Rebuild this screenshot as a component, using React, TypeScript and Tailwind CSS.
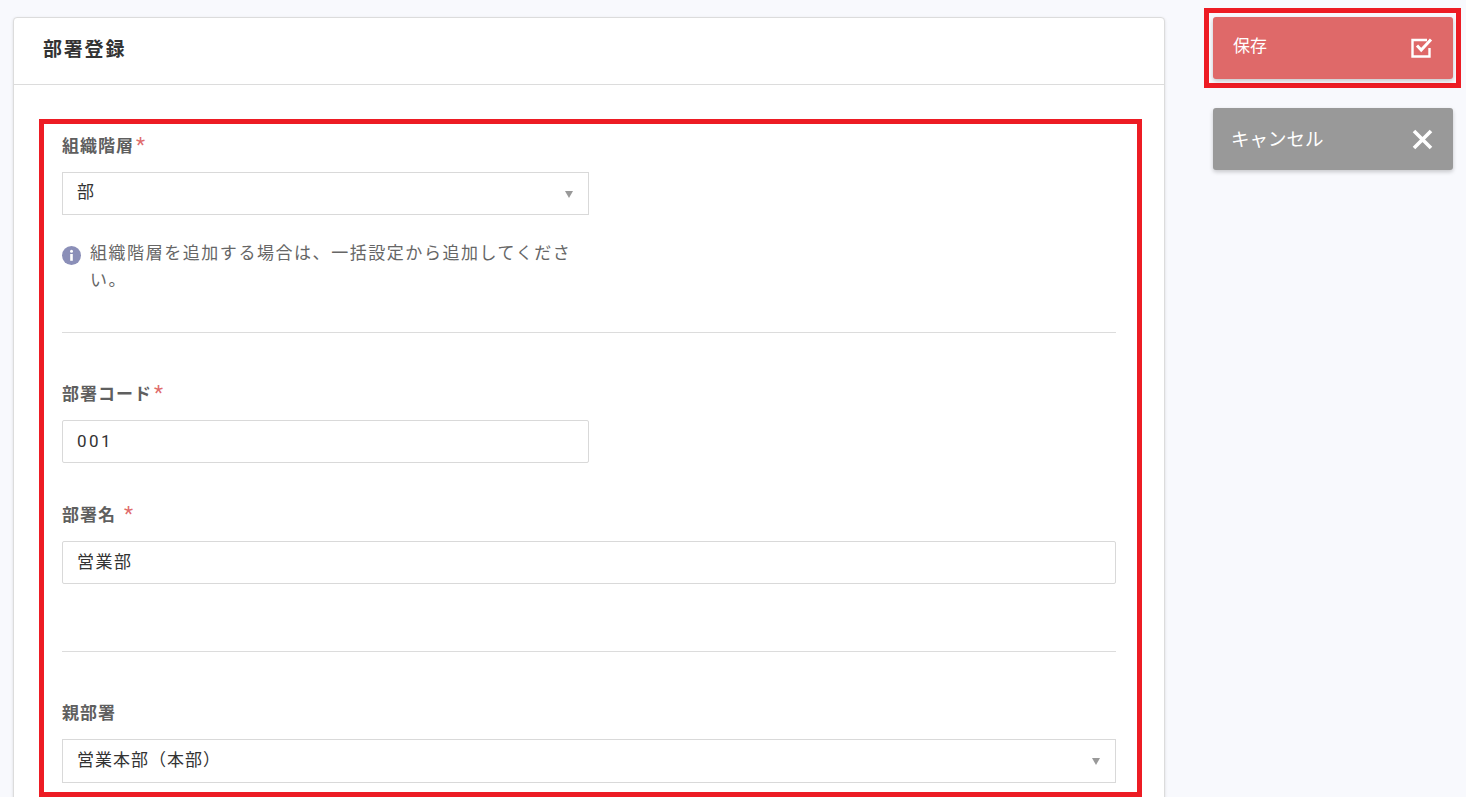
const font = "font-['Roboto','Noto_Sans_CJK_JP',sans-serif]";

function Label({ text, required, gap }: { text: string; required?: boolean; gap?: boolean }) {
  return (
    <label className="block h-6 text-[17px] leading-6 font-bold tracking-[1px] text-[#5f5f5f]">
      {text}
      {required && <span className={`ml-[2px] text-[21px] leading-none font-normal text-[#e06c6c] ${gap ? "ml-[8px]" : ""}`}>*</span>}
    </label>
  );
}

function Select({ value, className }: { value: string; className: string }) {
  return (
    <div className={`mt-[14px] flex items-center justify-between border border-[#d9d9d9] bg-white pb-[1px] pl-[14px] pr-[15px] ${className}`}>
      <span className="text-[17px] tracking-[1px] text-[#333333]">{value}</span>
      <svg width="8" height="7" viewBox="0 0 8 7" className="mt-[2px]"><path d="M0 0h8L4 7z" fill="#999999" /></svg>
    </div>
  );
}

function TextInput({ value, className }: { value: string; className: string }) {
  return (
    <input
      readOnly
      value={value}
      className={`mt-[14px] block h-[43px] rounded-[2px] border border-[#d9d9d9] bg-white px-[14px] text-[17px] text-[#333333] outline-none ${className}`}
    />
  );
}

export default function App() {
  return (
    <div className={`flex h-[797px] overflow-hidden bg-[#f8f9fd] ${font}`}>
      {/* Form card */}
      <main className="ml-[13px] mt-[17px] h-[900px] w-[1152px] shrink-0 rounded-[4px] border border-[#dcdcdc] bg-white shadow-[0_1px_3px_rgba(0,0,0,0.12)]">
        <header className="flex h-[67px] items-center border-b border-[#dcdcdc] pb-[2px] pl-[29px]">
          <h1 className="text-[19px] font-bold tracking-[1.8px] text-[#333333]">部署登録</h1>
        </header>

        <div className="ml-[25px] mr-[22px] mt-[34px] border-[5px] border-[#ed1c24] pb-[9px] pl-[18px] pr-[21px] pt-[10px]">
          <Label text="組織階層" required />
          <Select value="部" className="h-[43px] w-[527px]" />

          <div className="mt-[25px] flex w-[527px] items-start">
            <svg className="mt-[6px] shrink-0" width="19" height="19" viewBox="0 0 19 19">
              <circle cx="9.5" cy="9.5" r="9.5" fill="#8b8fb8" />
              <circle cx="9.5" cy="5.3" r="1.5" fill="#ffffff" />
              <rect x="8.2" y="8" width="2.6" height="6.8" fill="#ffffff" />
            </svg>
            <p className="ml-[9px] text-[17px] leading-[27px] tracking-[1.55px] text-[#666666]">
              組織階層を追加する場合は、一括設定から追加してください。
            </p>
          </div>

          <hr className="mt-[38px] border-[#dcdcdc]" />

          <div className="mt-[49px]">
            <Label text="部署コード" required />
          </div>
          <TextInput value="001" className="w-[527px] pb-[2px] tracking-[2.5px]" />

          <div className="mt-[40px]">
            <Label text="部署名" required gap />
          </div>
          <TextInput value="営業部" className="w-full pb-[5px] tracking-[1.5px]" />

          <hr className="mt-[67px] border-[#dcdcdc]" />

          <div className="mt-[49px]">
            <Label text="親部署" />
          </div>
          <Select value="営業本部（本部）" className="h-[44px] w-full" />
        </div>
      </main>

      {/* Actions */}
      <aside className="ml-[39px] mt-[8px] w-[257px] shrink-0">
        <div className="border-[5px] border-[#ed1c24] px-[4px] py-[4px]">
          <button className="flex h-[62px] w-[240px] items-center justify-between rounded-[3px] bg-[#df6969] pb-[3px] pl-[20px] pr-[20px] text-[17px] text-white shadow-[0_2px_4px_rgba(0,0,0,0.2)]">
            <span>保存</span>
            <svg width="22" height="20" viewBox="0 0 22 20" fill="none" className="mt-[2px]">
              <path d="M18.5 10v8.5H1.5V2h14.5" stroke="#ffffff" strokeWidth="2.4" />
              <path d="M6 7.5l4.2 4.5 9.8-10.5" stroke="#ffffff" strokeWidth="3" />
            </svg>
          </button>
        </div>
        <button className="ml-[9px] mt-[20px] flex h-[62px] w-[240px] items-center justify-between rounded-[3px] bg-[#999999] pl-[18px] pr-[20px] text-[18.5px] text-white shadow-[0_2px_4px_rgba(0,0,0,0.2)]">
          <span className="mt-[3px]">キャンセル</span>
          <svg width="21" height="21" viewBox="0 0 21 21" fill="none">
            <path d="M2 2l17 17M19 2L2 19" stroke="#ffffff" strokeWidth="3.6" />
          </svg>
        </button>
      </aside>
    </div>
  );
}
